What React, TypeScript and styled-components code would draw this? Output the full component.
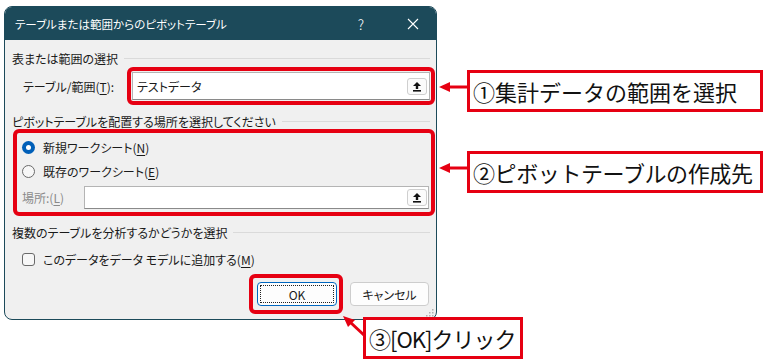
import React from 'react'
import styled, { createGlobalStyle } from 'styled-components'

const RED = '#e60012'
const TEAL = '#1c4a5a'

const GlobalStyle = createGlobalStyle`
  html, body {
    margin: 0;
    padding: 0;
    background: #fff;
  }
  body {
    font-family: "Noto Sans CJK JP", "Noto Sans", sans-serif;
  }
`

const Stage = styled.div`
  position: relative;
  width: 774px;
  height: 363px;
  box-sizing: border-box;
  padding: 6px 0 0 4px;
  overflow: hidden;
  background: #fff;
`

const Dialog = styled.div`
  position: relative;
  width: 433px;
  height: 314px;
  box-sizing: border-box;
  border: 1px solid ${TEAL};
  border-radius: 8px;
  background: #f0f0f0;
  display: flex;
  flex-direction: column;
  font-size: 12px;
  color: #1a1a1a;
  font-feature-settings: "palt";
  overflow: hidden;
`

const TitleBar = styled.div`
  height: 33px;
  flex: none;
  display: flex;
  align-items: center;
  padding-left: 10px;
  background: ${TEAL};
  color: #fff;
  font-size: 11.5px;
`

const TitleText = styled.div`
  flex: 1;
`

const TitleButton = styled.div<{ $w: number }>`
  width: ${(p) => p.$w}px;
  height: 33px;
  display: flex;
  align-items: center;
  justify-content: center;
  font-size: 14px;
  font-weight: 300;
`

const Body = styled.div`
  padding: 0 1px 0 7px;
  display: flex;
  flex-direction: column;
`

const SectionHeader = styled.div<{ $top: number }>`
  height: 16px;
  margin-top: ${(p) => p.$top}px;
  margin-right: 5px;
  display: flex;
  align-items: center;
  white-space: nowrap;

  &::after {
    content: '';
    flex: 1;
    height: 1px;
    margin-left: 6px;
    background: #dadada;
  }
`

const RangeRow = styled.div`
  margin-top: 1px;
  padding-left: 11px;
  display: flex;
  align-items: center;
`

const Label = styled.span<{ $disabled?: boolean }>`
  color: ${(p) => (p.$disabled ? '#8a8a8a' : 'inherit')};
  white-space: nowrap;
`

const Key = styled.span`
  text-decoration: underline;
  text-underline-offset: 2px;
`

const Highlight = styled.div`
  box-sizing: border-box;
  border: 4px solid ${RED};
  border-radius: 6px;
`

const RangeBox = styled(Highlight)`
  width: 308px;
  height: 38px;
  margin-left: auto;
  padding: 1px;
  display: flex;
`

const Field = styled.div<{ $w?: number }>`
  box-sizing: border-box;
  flex: ${(p) => (p.$w ? 'none' : '1')};
  width: ${(p) => (p.$w ? `${p.$w}px` : 'auto')};
  display: flex;
  align-items: center;
  padding: 0 2px 0 4px;
  background: #fff;
  border: 1px solid #b4b4b4;
  border-bottom-color: #8a8a8a;
  font-size: 12px;
`

const FieldText = styled.span`
  flex: 1;
`

const PickButton = styled.div`
  width: 20px;
  height: 17px;
  box-sizing: border-box;
  border: 1px solid #cfcfcf;
  border-radius: 3px;
  background: #fbfbfb;
  display: flex;
  align-items: center;
  justify-content: center;
`

const PlaceBox = styled(Highlight)`
  height: 87px;
  margin-left: 1px;
  padding: 4px 2px 3px 5px;
  display: flex;
  flex-direction: column;
  gap: 4px;
`

const OptionRow = styled.div`
  height: 20px;
  display: flex;
  align-items: center;
  gap: 8px;
`

const Radio = styled.span<{ $checked?: boolean }>`
  width: 13px;
  height: 13px;
  box-sizing: border-box;
  border-radius: 50%;
  flex: none;
  background: ${(p) => (p.$checked ? '#005fb8' : '#f7f7f7')};
  border: ${(p) => (p.$checked ? 'none' : '1px solid #6a6a6a')};
  display: flex;
  align-items: center;
  justify-content: center;

  &::after {
    content: '';
    display: ${(p) => (p.$checked ? 'block' : 'none')};
    width: 5px;
    height: 5px;
    border-radius: 50%;
    background: #fff;
  }
`

const LocationRow = styled.div`
  height: 24px;
  display: flex;
  align-items: center;
  justify-content: space-between;
`

const LocationField = styled(Field)`
  height: 23px;
  padding-right: 1px;
`

const CheckRow = styled.div`
  height: 16px;
  margin-top: 11px;
  padding-left: 10px;
  display: flex;
  align-items: center;
  gap: 8px;
`

const Checkbox = styled.span`
  width: 13px;
  height: 13px;
  box-sizing: border-box;
  border: 1px solid #6a6a6a;
  border-radius: 3px;
  background: #f7f7f7;
`

const ButtonRow = styled.div`
  margin-top: 7px;
  padding-right: 6px;
  display: flex;
  justify-content: flex-end;
  align-items: center;
  gap: 7px;
`

const OkBox = styled(Highlight)`
  width: 94px;
  height: 40px;
  padding: 4px 3px 0 4px;
`

const Button = styled.div<{ $primary?: boolean }>`
  position: relative;
  width: ${(p) => (p.$primary ? 80 : 79)}px;
  height: 24px;
  box-sizing: border-box;
  border: 1px solid ${(p) => (p.$primary ? '#0067c0' : '#cdcdcd')};
  border-radius: 4px;
  background: #fdfdfd;
  display: flex;
  align-items: center;
  justify-content: center;
  font-size: 12px;

  &::after {
    content: '';
    display: ${(p) => (p.$primary ? 'block' : 'none')};
    position: absolute;
    inset: 2px;
    border: 1px dotted #222;
  }
`

const Grip = styled.svg`
  position: absolute;
  right: 2px;
  bottom: 2px;
`

const Callout = styled.div<{ $x: number; $y: number; $w: number; $spacing?: number }>`
  position: absolute;
  left: ${(p) => p.$x}px;
  top: ${(p) => p.$y}px;
  width: ${(p) => p.$w}px;
  height: 42px;
  box-sizing: border-box;
  border: 3px solid ${RED};
  background: #fff;
  padding-left: 3px;
  display: flex;
  align-items: center;
  font-size: 22px;
  letter-spacing: ${(p) => p.$spacing ?? 0}px;
  color: #111;
  white-space: nowrap;
  overflow: hidden;
`

const Arrows = styled.svg`
  position: absolute;
  left: 0;
  top: 0;
  pointer-events: none;
`

const UpIcon = () => (
  <svg width="10" height="11" viewBox="0 0 10 11">
    <path d="M5 1 L9 5 H6.2 V8 H3.8 V5 H1 Z" fill="#111" />
    <rect x="1" y="9" width="8" height="1.6" fill="#111" />
  </svg>
)

const App: React.FC = () => {
  return (
    <Stage>
      <GlobalStyle />
      <Dialog>
        <TitleBar>
          <TitleText>テーブルまたは範囲からのピボットテーブル</TitleText>
          <TitleButton $w={58}>?</TitleButton>
          <TitleButton $w={46}>
            <svg width="12" height="12" viewBox="0 0 12 12">
              <path d="M1 1 L11 11 M11 1 L1 11" stroke="#fff" strokeWidth="1.1" />
            </svg>
          </TitleButton>
        </TitleBar>
        <Body>
          <SectionHeader $top={10}>表または範囲の選択</SectionHeader>
          <RangeRow>
            <Label>
              テーブル/範囲(<Key>T</Key>):
            </Label>
            <RangeBox>
              <Field>
                <FieldText>テストデータ</FieldText>
                <PickButton>
                  <UpIcon />
                </PickButton>
              </Field>
            </RangeBox>
          </RangeRow>

          <SectionHeader $top={8}>ピボットテーブルを配置する場所を選択してください</SectionHeader>
          <PlaceBox>
            <OptionRow>
              <Radio $checked />
              <Label>
                新規ワークシート(<Key>N</Key>)
              </Label>
            </OptionRow>
            <OptionRow>
              <Radio />
              <Label>
                既存のワークシート(<Key>E</Key>)
              </Label>
            </OptionRow>
            <LocationRow>
              <Label $disabled>
                場所:(<Key>L</Key>)
              </Label>
              <LocationField $w={345}>
                <FieldText />
                <PickButton>
                  <UpIcon />
                </PickButton>
              </LocationField>
            </LocationRow>
          </PlaceBox>

          <SectionHeader $top={8}>複数のテーブルを分析するかどうかを選択</SectionHeader>
          <CheckRow>
            <Checkbox />
            <Label>
              このデータをデータ モデルに追加する(<Key>M</Key>)
            </Label>
          </CheckRow>

          <ButtonRow>
            <OkBox>
              <Button $primary>OK</Button>
            </OkBox>
            <Button>キャンセル</Button>
          </ButtonRow>
        </Body>
        <Grip width="8" height="8" viewBox="0 0 8 8">
          <rect x="6" y="0" width="1.5" height="1.5" fill="#b0b0b0" />
          <rect x="3" y="3" width="1.5" height="1.5" fill="#b0b0b0" />
          <rect x="6" y="3" width="1.5" height="1.5" fill="#b0b0b0" />
          <rect x="0" y="6" width="1.5" height="1.5" fill="#b0b0b0" />
          <rect x="3" y="6" width="1.5" height="1.5" fill="#b0b0b0" />
          <rect x="6" y="6" width="1.5" height="1.5" fill="#b0b0b0" />
        </Grip>
      </Dialog>

      <Callout $x={467} $y={70} $w={296}>①集計データの範囲を選択</Callout>
      <Callout $x={467} $y={151} $w={296} $spacing={-0.4}>②ピボットテーブルの作成先</Callout>
      <Callout $x={363} $y={317} $w={160} $spacing={-1}>③[OK]クリック</Callout>

      <Arrows width="774" height="363" viewBox="0 0 774 363">
        <line x1="448" y1="87" x2="467" y2="87" stroke={RED} strokeWidth="3" />
        <polygon points="439,87 450,82 450,92" fill={RED} />
        <line x1="448" y1="168" x2="467" y2="168" stroke={RED} strokeWidth="3" />
        <polygon points="439,168 450,163 450,173" fill={RED} />
        <line x1="350" y1="322" x2="365" y2="336" stroke={RED} strokeWidth="3" />
        <polygon points="343,316 355,320 348,327" fill={RED} />
      </Arrows>
    </Stage>
  )
}

export default App
